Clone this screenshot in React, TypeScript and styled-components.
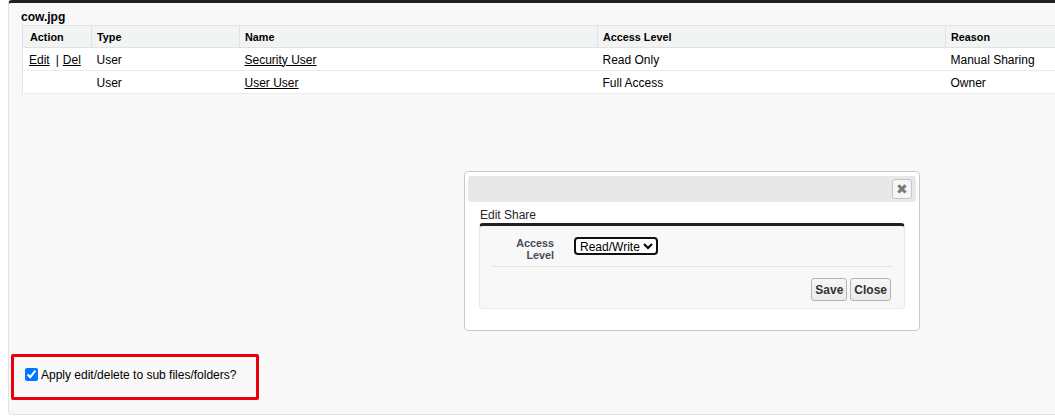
import styled, { createGlobalStyle } from "styled-components"

const GlobalStyle = createGlobalStyle`
  html, body {
    margin: 0;
    padding: 0;
    background: #fff;
    font-family: "Liberation Sans", Arial, sans-serif;
    color: #000;
  }
`

const Page = styled.div`
  width: 1055px;
  height: 416px;
  padding-left: 8px;
  box-sizing: border-box;
  overflow: hidden;
`

const Panel = styled.div`
  position: relative;
  display: flex;
  flex-direction: column;
  height: 415px;
  box-sizing: border-box;
  background: #f8f8f8;
  border-top: 3px solid #222;
  border-left: 1px solid #e0e3e5;
  border-bottom: 1px solid #e0e3e5;
  border-radius: 4px 0 0 4px;
  padding-top: 6px;
`

const Title = styled.h2`
  margin: 0 0 0 12px;
  font-size: 12px;
  font-weight: bold;
  line-height: 16px;
`

const Table = styled.table`
  margin-left: 13px;
  width: 1123px;
  table-layout: fixed;
  border-collapse: collapse;
  background: #fff;
  border: 1px solid #e0e3e5;
  font-size: 12px;
`

const Th = styled.th<{ $width: number }>`
  box-sizing: border-box;
  width: ${(p) => p.$width}px;
  background: #f2f3f3;
  border-left: 1px solid #e0e3e5;
  border-bottom: 1px solid #e0e3e5;
  text-align: left;
  font-size: 10.8px;
  font-weight: bold;
  height: 22px;
  padding: 1px 5px 0;
  &:first-child {
    border-left: none;
    padding-left: 7px;
  }
`

const Td = styled.td`
  height: 21px;
  padding: 1px 5px 0;
  border-bottom: 1px solid #ececec;
  white-space: nowrap;
  &:first-child {
    padding-left: 6px;
  }
`

const Link = styled.a`
  color: #000;
  text-decoration: underline;
  cursor: pointer;
`

const Pipe = styled.span`
  margin: 0 4px 0 6px;
`

const Dialog = styled.div`
  position: absolute;
  left: 455px;
  top: 168px;
  width: 456px;
  height: 160px;
  box-sizing: border-box;
  background: #fff;
  border: 1px solid #c9c9c9;
  border-radius: 4px;
  padding: 4px 3px;
`

const DialogHeader = styled.div`
  display: flex;
  justify-content: flex-end;
  align-items: flex-start;
  height: 26px;
  box-sizing: border-box;
  padding: 3px 4px 0 0;
  background: #e8e8e8;
  border-radius: 3px;
`

const CloseButton = styled.button`
  width: 20px;
  height: 20px;
  padding: 0;
  display: flex;
  align-items: center;
  justify-content: center;
  background: #f6f6f6;
  border: 1px solid #c4c4c4;
  border-radius: 3px;
  color: #7a7a7a;
  font-size: 14px;
  line-height: 1;
  cursor: pointer;
`

const DialogBody = styled.div`
  padding: 0 11px;
`

const DialogTitle = styled.div`
  margin: 6px 0 0 1px;
  font-size: 12px;
  line-height: 15px;
  color: #2b2626;
`

const Block = styled.div`
  background: #f8f8f8;
  border: 1px solid #ebebeb;
  border-top: 3px solid #222;
  border-radius: 4px;
  padding-top: 11px;
`

const FieldRow = styled.div`
  display: flex;
  align-items: flex-start;
  margin: 0 11px 0 12px;
  padding-bottom: 5px;
  border-bottom: 1px solid #e4e4e4;
`

const FieldLabel = styled.label`
  width: 62px;
  text-align: right;
  font-size: 10.8px;
  font-weight: bold;
  line-height: 12px;
  color: #4a4a56;
`

const Select = styled.select`
  margin: 0 0 0 20px;
  height: 18px;
  font-family: "Liberation Sans", Arial, sans-serif;
  font-size: 12px;
  color: #000;
  background: #fff;
  border: 2px solid #111;
  border-radius: 4px;
  padding: 0;
`

const ButtonRow = styled.div`
  display: flex;
  justify-content: flex-end;
  gap: 3px;
  padding: 11px 13px 7px 0;
`

const Button = styled.button`
  height: 23px;
  padding: 0 3px;
  font-family: "Liberation Sans", Arial, sans-serif;
  font-size: 12px;
  font-weight: bold;
  color: #333;
  background: linear-gradient(#f6f6f6, #ebebeb);
  border: 1px solid #b5b5b5;
  border-radius: 3px;
  cursor: pointer;
`

const OptionBox = styled.label`
  margin: auto 0 14px 2px;
  width: 248px;
  height: 46px;
  box-sizing: border-box;
  display: flex;
  align-items: center;
  gap: 3px;
  padding: 0 11px 5px;
  border: 3px solid #e8000b;
  border-radius: 2px;
  font-size: 12px;
`

const Checkbox = styled.input`
  margin: 0;
  width: 13px;
  height: 13px;
  accent-color: #0075ff;
`

type Share = {
  id: number
  type: string
  name: string
  access: string
  reason: string
  editable: boolean
}

const shares: Share[] = [
  { id: 1, type: "User", name: "Security User", access: "Read Only", reason: "Manual Sharing", editable: true },
  { id: 2, type: "User", name: "User User", access: "Full Access", reason: "Owner", editable: false },
]

export default function App() {
  return (
    <>
      <GlobalStyle />
      <Page>
        <Panel>
          <Title>cow.jpg</Title>
          <Table>
            <thead>
              <tr>
                <Th $width={69}>Action</Th>
                <Th $width={148}>Type</Th>
                <Th $width={358}>Name</Th>
                <Th $width={348}>Access Level</Th>
                <Th $width={200}>Reason</Th>
              </tr>
            </thead>
            <tbody>
              {shares.map((share) => (
                <tr key={share.id}>
                  <Td>
                    {share.editable && (
                      <>
                        <Link>Edit</Link>
                        <Pipe>|</Pipe>
                        <Link>Del</Link>
                      </>
                    )}
                  </Td>
                  <Td>{share.type}</Td>
                  <Td>
                    <Link>{share.name}</Link>
                  </Td>
                  <Td>{share.access}</Td>
                  <Td>{share.reason}</Td>
                </tr>
              ))}
            </tbody>
          </Table>

          <Dialog role="dialog">
            <DialogHeader>
              <CloseButton type="button" aria-label="Close">
                ✖
              </CloseButton>
            </DialogHeader>
            <DialogBody>
              <DialogTitle>Edit Share</DialogTitle>
              <Block>
                <FieldRow>
                  <FieldLabel htmlFor="access">
                    Access
                    <br />
                    Level
                  </FieldLabel>
                  <Select id="access" defaultValue="rw">
                    <option value="r">Read Only</option>
                    <option value="rw">Read/Write</option>
                  </Select>
                </FieldRow>
                <ButtonRow>
                  <Button type="button">Save</Button>
                  <Button type="button">Close</Button>
                </ButtonRow>
              </Block>
            </DialogBody>
          </Dialog>

          <OptionBox>
            <Checkbox type="checkbox" defaultChecked />
            Apply edit/delete to sub files/folders?
          </OptionBox>
        </Panel>
      </Page>
    </>
  )
}
